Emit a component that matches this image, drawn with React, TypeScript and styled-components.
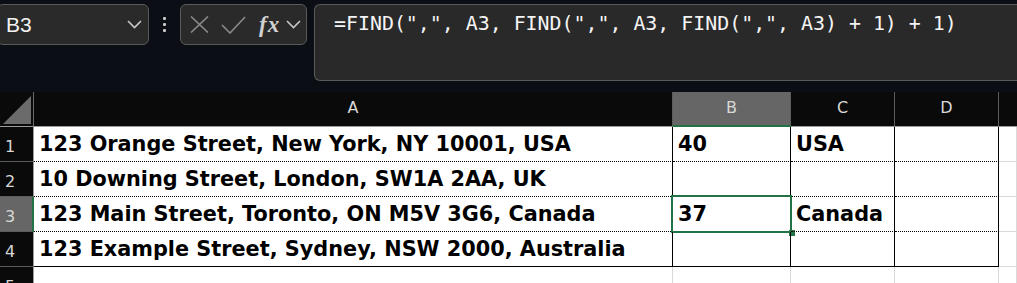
import * as React from "react";
import styled, { createGlobalStyle, css } from "styled-components";

const GlobalStyle = createGlobalStyle`
  html, body {
    margin: 0;
    padding: 0;
    background: #0b0e14;
    overflow: hidden;
  }
  body {
    width: 1017px;
    height: 283px;
  }
`;

const GREEN = "#217346";

const Page = styled.div`
  width: 1017px;
  height: 283px;
  overflow: hidden;
  display: flex;
  flex-direction: column;
`;

const TopBar = styled.div`
  height: 92px;
  flex: none;
  background: #0b0e14;
  display: flex;
  align-items: flex-start;
  padding-top: 4px;
  box-sizing: border-box;
`;

const NameBox = styled.div`
  margin-left: -3px;
  width: 152px;
  height: 41px;
  box-sizing: border-box;
  border: 1px solid #5a5a5a;
  border-radius: 6px;
  background: #2a2a2a;
  display: flex;
  align-items: center;
  justify-content: space-between;
  padding: 0 6px 0 8px;
  color: #f2f2f2;
  font-family: "Liberation Sans", Arial, sans-serif;
  font-size: 21px;
`;

const Dots = styled.div`
  width: 31px;
  height: 41px;
  display: flex;
  flex-direction: column;
  align-items: center;
  justify-content: center;
  gap: 3px;

  span {
    width: 3px;
    height: 3px;
    border-radius: 1px;
    background: #c8c8c8;
  }
`;

const FxBox = styled.div`
  width: 127px;
  height: 41px;
  box-sizing: border-box;
  border: 1px solid #5a5a5a;
  border-radius: 6px;
  background: #2a2a2a;
  display: flex;
  align-items: center;
  padding-left: 9px;
  gap: 12px;
`;

const FxLabel = styled.span`
  font-family: "Liberation Serif", "DejaVu Serif", serif;
  font-style: italic;
  font-weight: bold;
  font-size: 23px;
  color: #d0d0d0;
  margin-left: 1px;
  margin-right: -6px;
  letter-spacing: 1px;
`;

const FormulaBox = styled.div`
  margin-left: 7px;
  flex: 1;
  height: 77px;
  box-sizing: border-box;
  border: 1px solid #5a5a5a;
  border-right: none;
  border-radius: 6px 0 0 6px;
  background: #292929;
  padding: 7px 0 0 19px;
  color: #f4f4f4;
  font-family: "DejaVu Sans Mono", "Liberation Mono", monospace;
  font-size: 19.9px;
  line-height: 24px;
  white-space: pre;
`;

const Sheet = styled.div`
  display: grid;
  grid-template-columns: 34px 639px 118px 104px 104px 1fr;
  grid-template-rows: 35px repeat(5, 35px);
  background: #ffffff;
`;

const Corner = styled.div`
  background: #0a0a0a;
  border-right: 1px solid #6a6a6a;
  border-bottom: 1px solid #9a9a9a;
  box-sizing: border-box;
  display: flex;
  align-items: flex-end;
  justify-content: flex-end;
  padding: 0 2px 2px 0;
`;

const ColHeader = styled.div<{ $selected?: boolean; $last?: boolean }>`
  background: ${(p) => (p.$selected ? "#666666" : "#0a0a0a")};
  color: #d8d8d8;
  font-family: "DejaVu Sans", sans-serif;
  font-size: 16px;
  box-sizing: border-box;
  border-right: ${(p) => (p.$last ? "none" : "1px solid #5c5c5c")};
  border-bottom: ${(p) => (p.$selected ? `2px solid ${GREEN}` : "1px solid #9a9a9a")};
  display: flex;
  justify-content: center;
  padding-top: 6px;
`;

const RowHeader = styled.div<{ $selected?: boolean }>`
  background: ${(p) => (p.$selected ? "#666666" : "#0a0a0a")};
  color: #d8d8d8;
  font-family: "DejaVu Sans", sans-serif;
  font-size: 16px;
  box-sizing: border-box;
  border-right: ${(p) => (p.$selected ? `2px solid ${GREEN}` : "1px solid #9a9a9a")};
  border-bottom: 1px solid #5c5c5c;
  padding: 10px 0 0 5px;
`;

type CellKind = "table" | "tableLast" | "outside";

const cellBorders = {
  table: css`
    border-right: 1px solid #000;
    border-bottom: 1px dotted #000;
  `,
  tableLast: css`
    border-right: 1px solid #000;
    border-bottom: 1px solid #000;
  `,
  outside: css`
    border-right: 1px solid #dadada;
    border-bottom: 1px solid #dadada;
  `,
};

const Cell = styled.div<{ $kind: CellKind }>`
  position: relative;
  box-sizing: border-box;
  ${(p) => cellBorders[p.$kind]}
  padding: 5px 0 0 5px;
  color: #000;
  font-family: "DejaVu Sans", Verdana, sans-serif;
  font-weight: bold;
  font-size: 20.8px;
  line-height: 24px;
  white-space: nowrap;
`;

const Selection = styled.div`
  position: absolute;
  left: -2px;
  top: -2px;
  right: -2px;
  bottom: -2px;
  border: 2px solid ${GREEN};
  pointer-events: none;

  &::after {
    content: "";
    position: absolute;
    right: -5px;
    bottom: -5px;
    width: 6px;
    height: 6px;
    background: ${GREEN};
  }
`;

const Chevron = ({ width = 15 }: { width?: number }) => (
  <svg width={width} height="9" viewBox="0 0 15 9">
    <path d="M1 1 L7.5 7.5 L14 1" fill="none" stroke="#c8c8c8" strokeWidth="1.6" />
  </svg>
);

const CrossIcon = () => (
  <svg width="19" height="17" viewBox="0 0 19 17">
    <path d="M1 0.5 L18 16.5 M18 0.5 L1 16.5" stroke="#8a8a8a" strokeWidth="1.6" fill="none" />
  </svg>
);

const CheckIcon = () => (
  <svg width="25" height="18" viewBox="0 0 25 18">
    <path d="M1 9 L9 17 L24 1" stroke="#8a8a8a" strokeWidth="1.6" fill="none" />
  </svg>
);

const Triangle = () => (
  <svg width="28" height="28" viewBox="0 0 28 28">
    <polygon points="0,28 28,28 28,0" fill="#6b6b6b" />
  </svg>
);

const columns = ["A", "B", "C", "D", ""];

const rows: string[][] = [
  ["123 Orange Street, New York, NY 10001, USA", "40", "USA", ""],
  ["10 Downing Street, London, SW1A 2AA, UK", "", "", ""],
  ["123 Main Street, Toronto, ON M5V 3G6, Canada", "37", "Canada", ""],
  ["123 Example Street, Sydney, NSW 2000, Australia", "", "", ""],
  ["", "", "", ""],
];

const formula = '=FIND(",", A3, FIND(",", A3, FIND(",", A3) + 1) + 1)';

export default function App() {
  return (
    <Page>
      <GlobalStyle />
      <TopBar>
        <NameBox>
          <span>B3</span>
          <Chevron />
        </NameBox>
        <Dots>
          <span />
          <span />
          <span />
        </Dots>
        <FxBox>
          <CrossIcon />
          <CheckIcon />
          <FxLabel>fx</FxLabel>
          <Chevron width={15} />
        </FxBox>
        <FormulaBox>{formula}</FormulaBox>
      </TopBar>
      <Sheet>
        <Corner>
          <Triangle />
        </Corner>
        {columns.map((c, i) => (
          <ColHeader key={i} $selected={c === "B"} $last={i === columns.length - 1}>
            {c}
          </ColHeader>
        ))}
        {rows.map((row, r) => (
          <React.Fragment key={r}>
            <RowHeader $selected={r === 2}>{r + 1}</RowHeader>
            {row.map((value, c) => (
              <Cell
                key={c}
                $kind={r === 4 ? "outside" : r === 3 ? "tableLast" : "table"}
              >
                {value}
                {r === 2 && c === 1 && <Selection />}
              </Cell>
            ))}
            <Cell $kind="outside" />
          </React.Fragment>
        ))}
      </Sheet>
    </Page>
  );
}
